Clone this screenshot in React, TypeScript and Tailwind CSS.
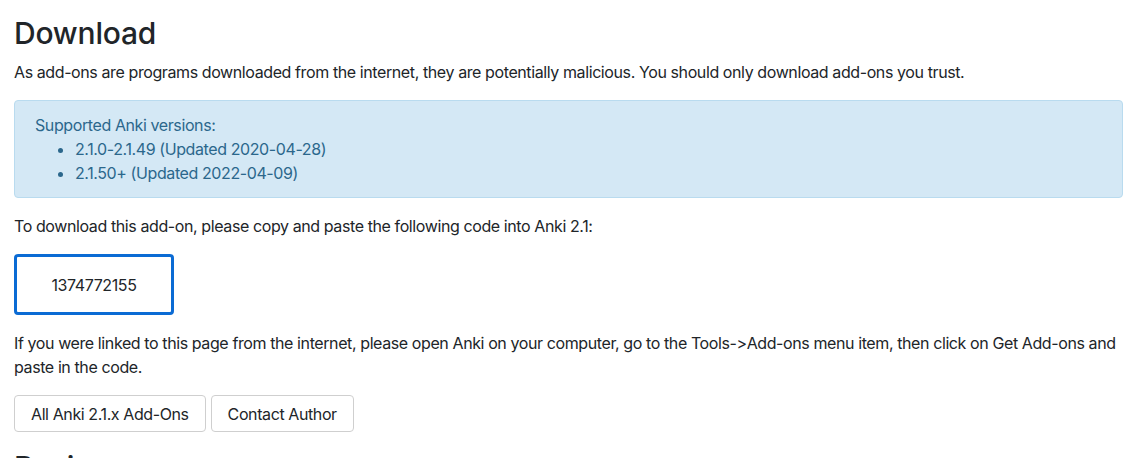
export default function App() {
  return (
    <div
      className="min-h-[458px] bg-white pl-[14px] pr-[13px] pt-[14px] text-[16px] leading-[24px] tracking-[-0.4px] text-[#212529] [font-feature-settings:'calt'_0]"
      style={{ fontFamily: 'Inter, "Noto Sans", sans-serif' }}
    >
      <h2 className="mb-2 text-[30px] font-medium leading-[38px] tracking-[-0.2px]">Download</h2>
      <p className="mb-4">
        As add-ons are programs downloaded from the internet, they are potentially malicious. You should only download add-ons you trust.
      </p>
      <div className="mb-4 rounded-[4px] border border-[#b9dbef] bg-[#d4e8f5] px-5 py-3 text-[#2b678c]">
        Supported Anki versions:
        <ul className="list-disc pl-10">
          <li>2.1.0-2.1.49 (Updated 2020-04-28)</li>
          <li>2.1.50+ (Updated 2022-04-09)</li>
        </ul>
      </div>
      <p className="mb-4">To download this add-on, please copy and paste the following code into Anki 2.1:</p>
      <div className="mb-4 flex h-[61px] w-[160px] items-center justify-center rounded-[4px] border-[3px] border-[#0b6bd4]">
        1374772155
      </div>
      <p className="mb-4">
        If you were linked to this page from the internet, please open Anki on your computer, go to the Tools-&gt;Add-ons menu item, then click on Get Add-ons and paste in the code.
      </p>
      <div className="mb-4 flex gap-[5px]">
        <button className="h-[37px] rounded-[4px] border border-[#cfcfcf] bg-white px-4 leading-[24px]">All Anki 2.1.x Add-Ons</button>
        <button className="h-[37px] rounded-[4px] border border-[#cfcfcf] bg-white px-4 leading-[24px]">Contact Author</button>
      </div>
      <h2 className="mb-2 text-[30px] font-medium leading-[38px] tracking-[-0.2px]">Reviews</h2>
    </div>
  );
}
